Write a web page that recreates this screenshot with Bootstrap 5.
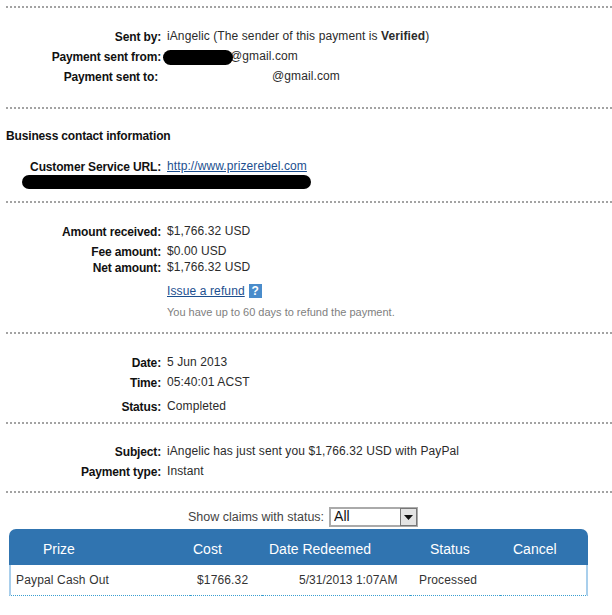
<!DOCTYPE html>
<html lang="en">
<head>
  <meta charset="UTF-8">
  <meta name="viewport" content="width=device-width, initial-scale=1.0">
  <title>Payment details</title>
  <link rel="stylesheet" href="https://cdn.jsdelivr.net/npm/bootstrap@5.3.0/dist/css/bootstrap.min.css">
  <style>
    body { font-family: "Liberation Sans", Arial, sans-serif; font-size: 12px; color: #2b2b2b; background: #fff; padding-top: 6px; overflow: hidden; }
    a { color: #1c4f8f; }
    .dots { border-top: 2px dotted #a3a3a3; margin-left: 6px; }
    .pay-row { display: flex; height: 20px; line-height: 22px; position: relative; }
    .pay-label { width: 161px; text-align: right; font-weight: 700; color: #111; flex: none; letter-spacing: -.15px; }
    .pay-val { margin-left: 6px; letter-spacing: .1px; line-height: 20px; }
    .short-row { height: 12px; line-height: 14px; }
    .short-row .pay-val { line-height: 12px; }
    .sec-a { padding: 18px 0 21px; }
    .sec-b { padding: 18px 0 0; height: 92px; }
    .sec-c { padding: 18px 0 10px; }
    .sec-d { padding: 18px 0 6px; }
    .sec-e { padding: 17px 0 10px; }
    .biz-title { font-weight: 700; color: #111; height: 16px; line-height: 18px; padding-left: 6px; margin-bottom: 13px; letter-spacing: -.15px; }
    .blob { position: absolute; background: #000; border-radius: 8px; }
    .blob-from { left: 163px; top: 4px; width: 70px; height: 15px; }
    .blob-url { left: 22px; top: 19px; width: 289px; height: 14px; }
    .to-val { margin-left: 114px; letter-spacing: .1px; line-height: 20px; }
    .from-val { margin-left: 69px; letter-spacing: .1px; line-height: 20px; }
    .to-label { width: 158px; }
    .refund-row { margin-top: 7px; }
    .refund-row .pay-val { line-height: 22px; }
    .refund-link { font-size: 12px; letter-spacing: .12px; }
    .help-box { display: inline-block; width: 13px; height: 14px; line-height: 14px; margin-left: 4px; background: #4a8ccb; color: #fff; font-weight: 700; font-size: 12px; text-align: center; }
    .refund-note { color: #808080; font-size: 11px; margin-top: 2px; }
    .refund-note .pay-val { letter-spacing: 0; }
    .gap-row { margin-top: 4px; }
    .claims-bar { display: flex; justify-content: center; align-items: center; padding: 14px 6px 2px 0; height: 36px; color: #444; font-size: 12.5px; }
    .claims-wrap { position: relative; margin-left: 5px; width: 89px; height: 20px; }
    .claims-select { width: 89px; height: 20px; appearance: none; border: 2px solid #aaa; background: #fff; color: #111; font-family: inherit; font-size: 14px; line-height: 14px; padding: 0 0 2px 3px; border-radius: 0; display: block; }
    .claims-arrow { position: absolute; right: 1px; top: 1px; width: 17px; height: 18px; background: #e4e4e4; border: 1px solid #777; display: flex; align-items: center; justify-content: center; pointer-events: none; }
    .claims-table { width: 579px; margin: 0 0 0 9px; table-layout: fixed; border-collapse: separate; border-spacing: 0; }
    .claims-table th { background: #3074b0; color: #fff; font-weight: 400; font-size: 14px; height: 36px; padding: 4px 0 0; border: 0; vertical-align: middle; }
    .claims-table th:first-child { border-top-left-radius: 7px; padding-left: 34px; }
    .claims-table th:last-child { border-top-right-radius: 7px; padding-left: 13px; }
    .claims-table th:nth-child(2) { padding-left: 3px; }
    .claims-table th:nth-child(3) { padding-left: 7px; }
    .claims-table th:nth-child(4) { padding-left: 20px; }
    .claims-table td { height: 31px; padding: 0; font-size: 12px; letter-spacing: .15px; color: #333; border: 0; border-bottom: 1px dotted #3a9fd0; vertical-align: middle; }
    .claims-table td:first-child { padding-left: 5px; border-left: 2px solid #a9cfec; }
    .claims-table td:last-child { border-right: 2px solid #a9cfec; }
    .claims-table td:nth-child(2) { padding-left: 7px; }
    .claims-table td:nth-child(3) { padding-left: 37px; letter-spacing: .02px; }
    .claims-table td:nth-child(4) { padding-left: 9px; }
    .col-prize { width: 181px; }
    .col-cost { width: 72px; }
    .col-date { width: 148px; }
    .col-status { width: 90px; }
    .col-cancel { width: 88px; }
  </style>
</head>
<body>
  <div class="dots"></div>
  <div class="sec-a">
    <div class="pay-row"><div class="pay-label">Sent by:</div><div class="pay-val">iAngelic (The sender of this payment is <b>Verified</b>)</div></div>
    <div class="pay-row"><div class="pay-label">Payment sent from:</div><div class="from-val">@gmail.com</div><span class="blob blob-from"></span></div>
    <div class="pay-row"><div class="pay-label to-label">Payment sent to:</div><div class="to-val">@gmail.com</div></div>
  </div>

  <div class="dots"></div>
  <div class="sec-b">
    <div class="biz-title">Business contact information</div>
    <div class="pay-row"><div class="pay-label">Customer Service URL:</div><div class="pay-val"><a href="#">http://www.prizerebel.com</a></div><span class="blob blob-url"></span></div>
  </div>

  <div class="dots"></div>
  <div class="sec-c">
    <div class="pay-row"><div class="pay-label">Amount received:</div><div class="pay-val">$1,766.32 USD</div></div>
    <div class="pay-row"><div class="pay-label">Fee amount:</div><div class="pay-val">$0.00 USD</div></div>
    <div class="pay-row short-row"><div class="pay-label">Net amount:</div><div class="pay-val">$1,766.32 USD</div></div>
    <div class="pay-row refund-row"><div class="pay-label"></div><div class="pay-val"><a class="refund-link" href="#">Issue a refund</a><span class="help-box">?</span></div></div>
    <div class="pay-row refund-note"><div class="pay-label"></div><div class="pay-val">You have up to 60 days to refund the payment.</div></div>
  </div>

  <div class="dots"></div>
  <div class="sec-d">
    <div class="pay-row"><div class="pay-label">Date:</div><div class="pay-val">5 Jun 2013</div></div>
    <div class="pay-row"><div class="pay-label">Time:</div><div class="pay-val">05:40:01 ACST</div></div>
    <div class="pay-row gap-row"><div class="pay-label">Status:</div><div class="pay-val">Completed</div></div>
  </div>

  <div class="dots"></div>
  <div class="sec-e">
    <div class="pay-row"><div class="pay-label">Subject:</div><div class="pay-val">iAngelic has just sent you $1,766.32 USD with PayPal</div></div>
    <div class="pay-row"><div class="pay-label">Payment type:</div><div class="pay-val">Instant</div></div>
  </div>

  <div class="dots"></div>
  <div class="claims-bar">
    <span>Show claims with status:</span>
    <div class="claims-wrap">
      <select class="claims-select"><option>All</option></select>
      <span class="claims-arrow"><svg width="9" height="5" viewBox="0 0 9 5"><path d="M0 0h9L4.5 5z" fill="#111"/></svg></span>
    </div>
  </div>
  <table class="table claims-table">
    <colgroup><col class="col-prize"><col class="col-cost"><col class="col-date"><col class="col-status"><col class="col-cancel"></colgroup>
    <thead><tr><th>Prize</th><th>Cost</th><th>Date Redeemed</th><th>Status</th><th>Cancel</th></tr></thead>
    <tbody><tr><td>Paypal Cash Out</td><td>$1766.32</td><td>5/31/2013 1:07AM</td><td>Processed</td><td></td></tr></tbody>
  </table>

  <script src="https://cdn.jsdelivr.net/npm/bootstrap@5.3.0/dist/js/bootstrap.bundle.min.js"></script>
</body>
</html>
